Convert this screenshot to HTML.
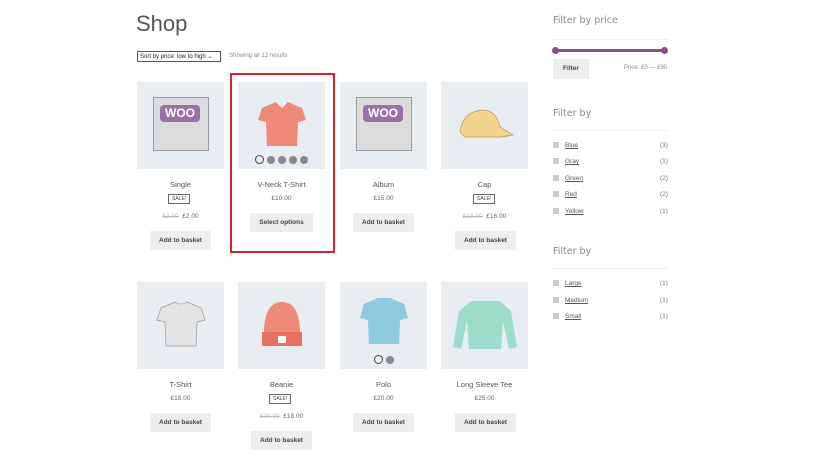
<!DOCTYPE html>
<html><head><style>
body{margin:0;width:820px;height:461px;background:#fff;font-family:"Liberation Sans",sans-serif;color:#43454b;position:relative;overflow:hidden}
.a{position:absolute}
h1{position:absolute;left:136px;top:11px;margin:0;font-size:22px;color:#555;font-family:"Liberation Sans",sans-serif;font-weight:normal;letter-spacing:0}
.img{position:absolute;width:87px;height:87px;background:#e7edf1}
.t{position:absolute;width:87px;text-align:center;font-size:7.5px;color:#555}
.p{position:absolute;width:87px;text-align:center;font-size:6.5px;color:#666}
.btn{position:absolute;background:#eeeeee;font-size:6.5px;font-weight:bold;color:#444;text-align:center;line-height:19px;height:19px}
.sale{position:absolute;border:1px solid #666;font-size:5px;padding:1px 3px;color:#444}
.f{position:absolute;font-size:6.5px}
.sq{display:inline-block;width:6px;height:6px;background:#ccc;margin-right:6px;vertical-align:-1px}
.f u{color:#555}
.c{position:absolute;left:660px;font-size:6.5px;color:#777}
.wt{font-size:9.5px;color:#888;font-family:"DejaVu Sans",sans-serif;position:absolute;left:553px}
.ln{position:absolute;left:553px;width:115px;height:1px;background:#f0f0f0}
</style></head><body>
<h1>Shop</h1>
<div class="a" style="left:137px;top:51px;width:84px;height:11px;border:1px solid #555;font-size:6px;line-height:10px;padding-left:2px;box-sizing:border-box;color:#222">Sort by price: low to high ⌄</div>
<div class="a" style="left:229px;top:53px;font-size:6px;color:#888">Showing all 12 results</div>
<div class="a" style="left:230px;top:73px;width:101px;height:176px;border:2px solid #d9222a"></div>

<div class="img" style="left:137px;top:82px"><div class="a" style="left:16px;top:15px;width:54px;height:52px;background:#dcdcdc;border:1px solid #999"></div><div class="a" style="left:23px;top:23px;width:40px;height:17px;background:#9b6fa8;border-radius:4px;color:#fff;font-weight:bold;font-size:12px;text-align:center;line-height:17px">WOO</div></div>
<div class="img" style="left:238px;top:82px"><svg class="a" style="left:14px;top:18px" width="60" height="50"><path d="M10 8 L24 2 L30 8 L36 2 L50 8 L54 20 L46 22 L45 46 L15 46 L14 22 L6 20Z" fill="#f08a78"/></svg><div class="a" style="left:17px;top:73px;font-size:0"><span style="display:inline-block;width:7px;height:7px;border:1px solid #444;border-radius:50%;margin-right:3px"></span><span style="display:inline-block;width:8px;height:8px;background:#888;border-radius:50%;margin-right:3px"></span><span style="display:inline-block;width:8px;height:8px;background:#888;border-radius:50%;margin-right:3px"></span><span style="display:inline-block;width:8px;height:8px;background:#888;border-radius:50%;margin-right:3px"></span><span style="display:inline-block;width:8px;height:8px;background:#888;border-radius:50%"></span></div></div>
<div class="img" style="left:340px;top:82px"><div class="a" style="left:16px;top:15px;width:54px;height:52px;background:#dcdcdc;border:1px solid #999"></div><div class="a" style="left:23px;top:23px;width:40px;height:17px;background:#9b6fa8;border-radius:4px;color:#fff;font-weight:bold;font-size:12px;text-align:center;line-height:17px">WOO</div></div>
<div class="img" style="left:441px;top:82px"><svg class="a" style="left:14px;top:25px" width="60" height="35"><path d="M5 25 Q8 4 28 3 Q42 4 45 20 L58 28 L46 30 L10 30Z" fill="#f3d28a" stroke="#b99850" stroke-width="0.7"/></svg></div>

<div class="t" style="left:137px;top:180px">Single</div>
<div class="sale" style="left:168px;top:194px">SALE!</div>
<div class="p" style="left:137px;top:213px"><s style="color:#bbb">£3.00</s> &nbsp;£2.00</div>
<div class="btn" style="left:150px;top:231px;width:61px">Add to basket</div>

<div class="t" style="left:238px;top:180px">V-Neck T-Shirt</div>
<div class="p" style="left:238px;top:195px">£10.00</div>
<div class="btn" style="left:250px;top:213px;width:63px">Select options</div>

<div class="t" style="left:340px;top:180px">Album</div>
<div class="p" style="left:340px;top:195px">£15.00</div>
<div class="btn" style="left:353px;top:213px;width:61px">Add to basket</div>

<div class="t" style="left:441px;top:180px">Cap</div>
<div class="sale" style="left:473px;top:194px">SALE!</div>
<div class="p" style="left:441px;top:213px"><s style="color:#bbb">£18.00</s> &nbsp;£16.00</div>
<div class="btn" style="left:455px;top:231px;width:61px">Add to basket</div>

<div class="img" style="left:137px;top:282px"><svg class="a" style="left:14px;top:18px" width="60" height="50"><path d="M10 8 L24 2 Q30 6 36 2 L50 8 L54 20 L46 22 L45 46 L15 46 L14 22 L6 20Z" fill="#e4e4e4" stroke="#999" stroke-width="0.7"/></svg></div>
<div class="img" style="left:238px;top:282px"><svg class="a" style="left:22px;top:16px" width="44" height="52"><path d="M4 36 Q4 4 22 4 Q40 4 40 36Z" fill="#f08a78"/><rect x="2" y="34" width="40" height="14" fill="#e8705e"/><rect x="18" y="38" width="8" height="7" fill="#fff"/></svg></div>
<div class="img" style="left:340px;top:282px"><svg class="a" style="left:14px;top:14px" width="60" height="50"><path d="M10 8 L24 2 L36 2 L50 8 L54 22 L46 24 L45 48 L15 48 L14 24 L6 22Z" fill="#8ccbe0"/></svg><div class="a" style="left:34px;top:73px;font-size:0"><span style="display:inline-block;width:7px;height:7px;border:1px solid #444;border-radius:50%;margin-right:3px"></span><span style="display:inline-block;width:8px;height:8px;background:#888;border-radius:50%"></span></div></div>
<div class="img" style="left:441px;top:282px"><svg class="a" style="left:10px;top:15px" width="68" height="55"><path d="M20 4 L48 4 L60 14 L66 50 L58 52 L52 24 L50 52 L18 52 L16 24 L10 52 L2 50 L8 14Z" fill="#9ddcc8"/></svg></div>

<div class="t" style="left:137px;top:380px">T-Shirt</div>
<div class="p" style="left:137px;top:395px">£18.00</div>
<div class="btn" style="left:150px;top:413px;width:61px">Add to basket</div>

<div class="t" style="left:238px;top:380px">Beanie</div>
<div class="sale" style="left:269px;top:394px">SALE!</div>
<div class="p" style="left:238px;top:413px"><s style="color:#bbb">£20.00</s> &nbsp;£18.00</div>
<div class="btn" style="left:251px;top:431px;width:61px">Add to basket</div>

<div class="t" style="left:340px;top:380px">Polo</div>
<div class="p" style="left:340px;top:395px">£20.00</div>
<div class="btn" style="left:353px;top:413px;width:61px">Add to basket</div>

<div class="t" style="left:441px;top:380px">Long Sleeve Tee</div>
<div class="p" style="left:441px;top:395px">£25.00</div>
<div class="btn" style="left:455px;top:413px;width:61px">Add to basket</div>

<div class="wt" style="top:15px">Filter by price</div>
<div class="ln" style="top:39px"></div>
<div class="a" style="left:555px;top:49px;width:110px;height:3px;background:#8a4f83"></div>
<div class="a" style="left:552px;top:47px;width:7px;height:7px;border-radius:50%;background:#8a4f83"></div>
<div class="a" style="left:661px;top:47px;width:7px;height:7px;border-radius:50%;background:#8a4f83"></div>
<div class="btn" style="left:553px;top:59px;width:36px;height:20px;line-height:20px">Filter</div>
<div class="a" style="left:624px;top:65px;font-size:6px;color:#888">Price: £0 — £90</div>

<div class="wt" style="top:108px">Filter by</div>
<div class="ln" style="top:130px"></div>
<div class="f" style="left:553px;top:142px"><span class="sq"></span><u>Blue</u></div><div class="c" style="top:142px">(3)</div>
<div class="f" style="left:553px;top:158px"><span class="sq"></span><u>Gray</u></div><div class="c" style="top:158px">(1)</div>
<div class="f" style="left:553px;top:175px"><span class="sq"></span><u>Green</u></div><div class="c" style="top:175px">(2)</div>
<div class="f" style="left:553px;top:191px"><span class="sq"></span><u>Red</u></div><div class="c" style="top:191px">(2)</div>
<div class="f" style="left:553px;top:208px"><span class="sq"></span><u>Yellow</u></div><div class="c" style="top:208px">(1)</div>

<div class="wt" style="top:246px">Filter by</div>
<div class="ln" style="top:268px"></div>
<div class="f" style="left:553px;top:280px"><span class="sq"></span><u>Large</u></div><div class="c" style="top:280px">(1)</div>
<div class="f" style="left:553px;top:297px"><span class="sq"></span><u>Medium</u></div><div class="c" style="top:297px">(1)</div>
<div class="f" style="left:553px;top:313px"><span class="sq"></span><u>Small</u></div><div class="c" style="top:313px">(1)</div>
</body></html>
